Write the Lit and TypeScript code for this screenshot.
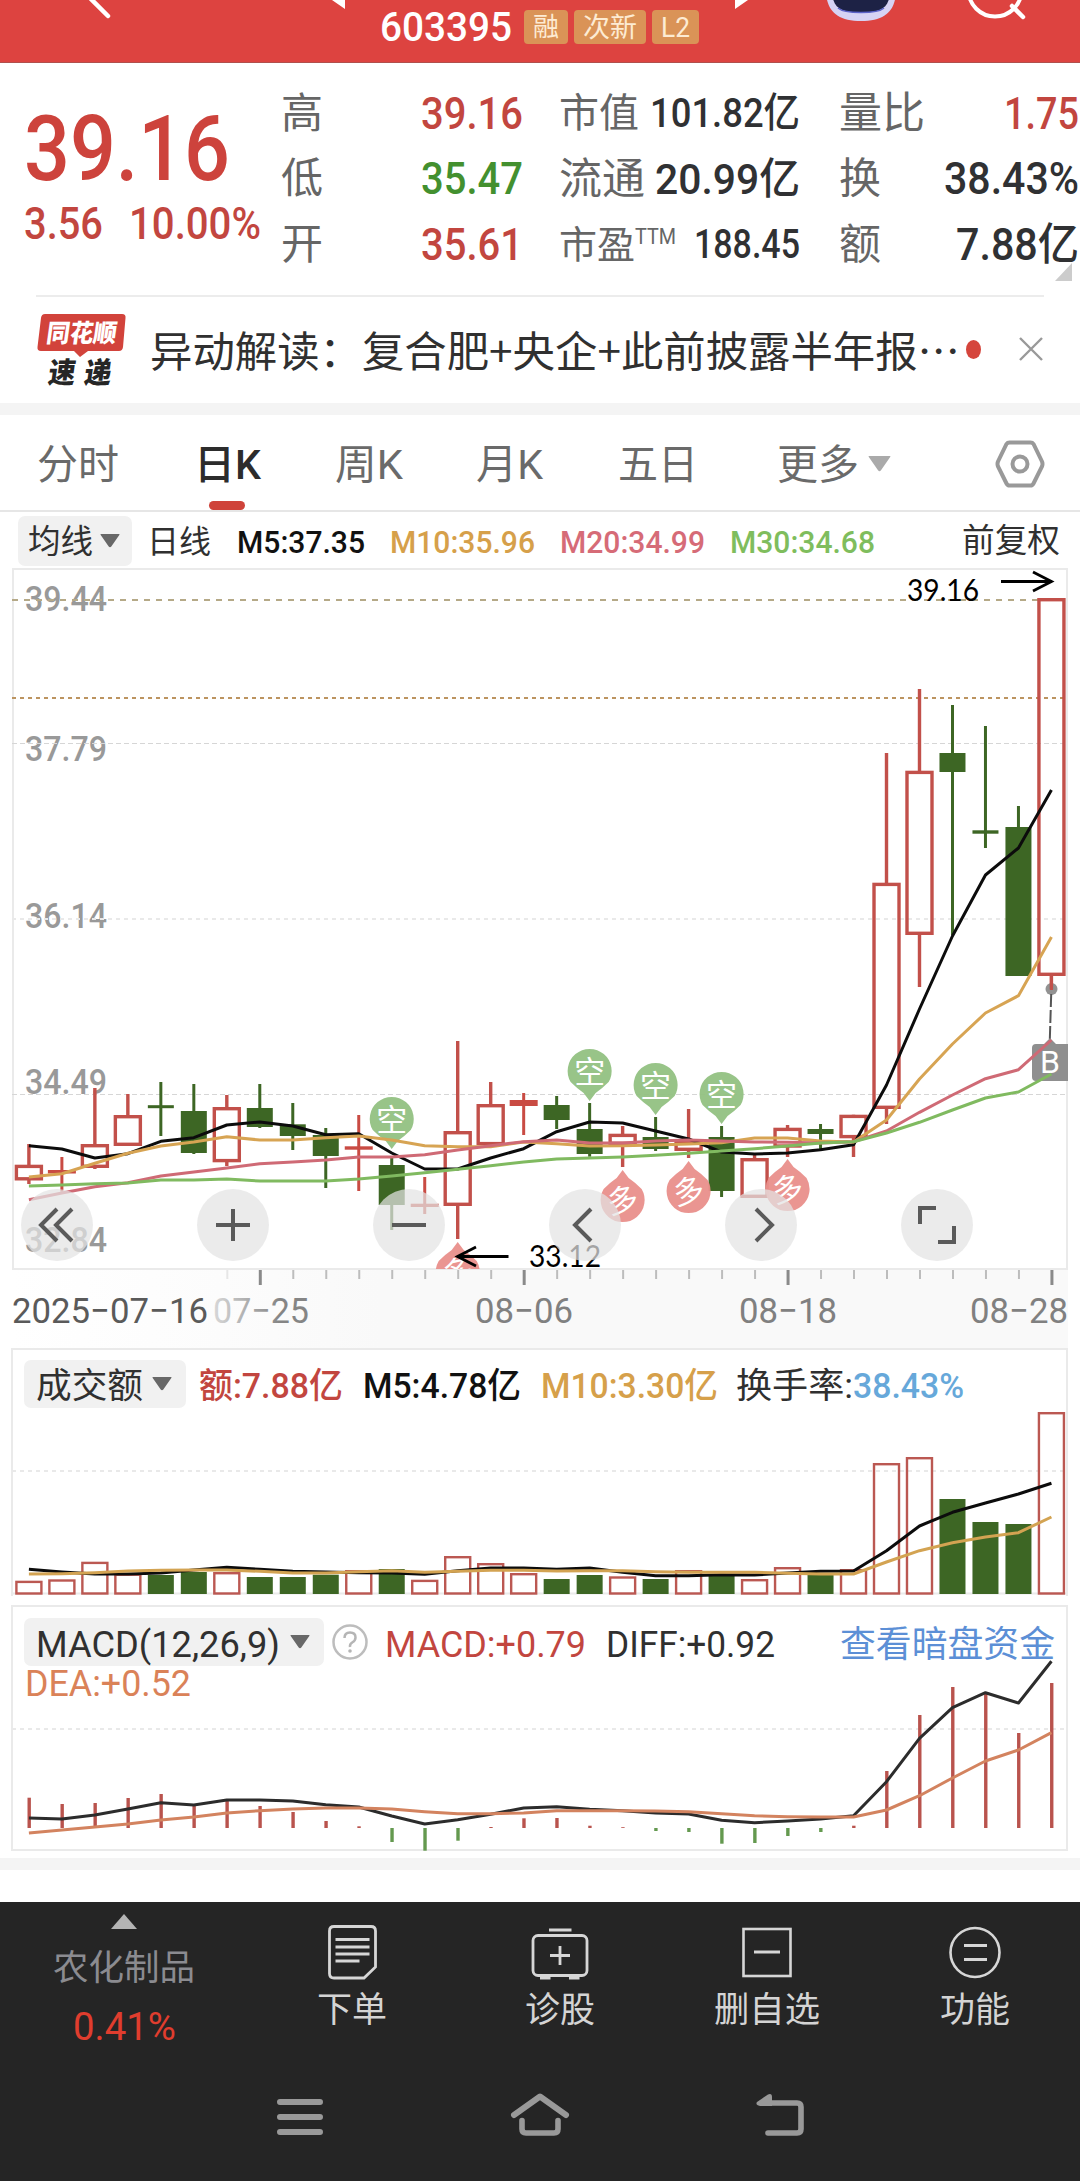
import { LitElement, html, svg, css } from "lit";
import { customElement } from "lit/decorators.js";

const X = (i: number) => 28.9 + i * 32.985;

type Candle = [string, number, number, number, number];
// colour, high, body top, body bottom, low
const candles: Candle[] = [
  ["r", 1144, 1164.7, 1180.5, 1184], ["r", 1157, 1170, 1173.5, 1191.7], ["r", 1088, 1144, 1168, 1169],
  ["r", 1094, 1115, 1146, 1146], ["g", 1082, 1105.2, 1108.2, 1136], ["g", 1084, 1111, 1153, 1154],
  ["r", 1095, 1107, 1162.3, 1166], ["g", 1084, 1108, 1127, 1128], ["g", 1103, 1124.3, 1136, 1150],
  ["g", 1128, 1135, 1156, 1188], ["r", 1115, 1146.3, 1149.7, 1191], ["g", 1156, 1165, 1205, 1230],
  ["r", 1177, 1203.7, 1207, 1214], ["r", 1041, 1131, 1206, 1239], ["r", 1082, 1104, 1145.3, 1145],
  ["r", 1093, 1100, 1106, 1135], ["g", 1096, 1105, 1120, 1129], ["g", 1103, 1129, 1154, 1156.7],
  ["r", 1126, 1133.7, 1145, 1167], ["g", 1117, 1137, 1149, 1151], ["r", 1109, 1140, 1151, 1158],
  ["g", 1126, 1137, 1191, 1197], ["r", 1155, 1158, 1198, 1198], ["r", 1125, 1127.7, 1147.7, 1157],
  ["g", 1124, 1129, 1134, 1149], ["r", 1114.7, 1114.7, 1138.3, 1157], ["r", 753, 882.7, 1109, 1124],
  ["r", 689, 770.7, 935, 987], ["g", 705, 753, 772, 935], ["g", 726, 830.3, 833.7, 848],
  ["g", 806, 827, 976, 976], ["r", 598, 598, 976, 989],
];
const ma5 = [1145.7, 1149, 1158, 1153.7, 1141.3, 1137.7, 1125, 1122, 1126, 1134.7, 1133.7, 1153, 1169, 1169, 1158, 1148.7, 1131.7, 1122, 1123, 1131, 1139, 1152, 1154, 1153, 1149.7, 1144.7, 1085, 1009, 936, 875, 848, 790];
const ma10 = [1177, 1173.7, 1163.3, 1153.3, 1146, 1142, 1136.7, 1140, 1140, 1137.7, 1136, 1140, 1145.7, 1146.7, 1146.7, 1142, 1143.7, 1146, 1145.7, 1145, 1144, 1142.7, 1138, 1138, 1141, 1142, 1120, 1079, 1044, 1013, 995.7, 937];
const ma20 = [1199.7, 1193, 1186.7, 1182.7, 1176, 1172, 1168, 1163.7, 1162, 1160, 1157, 1157, 1154.7, 1150, 1145.7, 1141.7, 1140, 1143, 1143, 1141, 1140, 1141, 1142, 1142.3, 1143, 1141.7, 1131, 1112.3, 1095, 1078.7, 1069.7, 1040];
const ma30 = [1186, 1185, 1183.7, 1183, 1180, 1180, 1179, 1181, 1181, 1181, 1179, 1176, 1172.7, 1169.3, 1165.7, 1162, 1159, 1158, 1157, 1155.3, 1153.3, 1151, 1148.7, 1146, 1143, 1141.7, 1133, 1122.3, 1110, 1098, 1092, 1074];

const volume = "r1580.7 r1579.3 r1561.7 r1573.5 g1575 g1572 r1572 g1577 g1577 g1574.7 r1570 g1569 r1579.7 r1556 r1563 r1573 g1579 g1575 r1576.3 g1579 r1570 g1575 r1579 r1567 g1575 r1569 r1463 r1457 g1499 g1522 g1524 r1412".split(" ");
const vol5 = [1569.3, 1572, 1574, 1574, 1573, 1570, 1567.3, 1569.3, 1571.3, 1572, 1572.7, 1573, 1574.3, 1570.7, 1568, 1568, 1569.3, 1568, 1572.3, 1575.7, 1575.7, 1574.7, 1575, 1573, 1571.3, 1571, 1550.7, 1526, 1512.3, 1503, 1494, 1483.3];
const vol10 = [1574, 1573.7, 1572.7, 1571, 1570.3, 1570, 1570, 1571.3, 1573, 1573, 1571.7, 1570.7, 1572.3, 1571.3, 1570.3, 1570.3, 1571, 1570.7, 1570.7, 1571.7, 1572.3, 1572.3, 1572.3, 1573.3, 1574, 1574, 1562, 1550.7, 1542.7, 1537, 1532.7, 1517];

const ZERO = 1828;
const macd = [1797.7, 1804, 1803, 1798, 1794, 1804, 1801, 1806, 1812, 1821, 1826.3, 1842, 1850.7, 1840.7, 1827, 1818.3, 1818, 1825.7, 1827.2, 1831, 1832, 1843.7, 1843, 1836, 1832, 1825.7, 1771, 1715, 1687, 1693, 1733, 1683];
const diff = [1818, 1819, 1815, 1809, 1802.7, 1805, 1800, 1800, 1801, 1804.7, 1807, 1816, 1824, 1819.7, 1814.3, 1808, 1806.7, 1809.3, 1810.7, 1813, 1814, 1820.3, 1822.7, 1821, 1819, 1815.7, 1781.7, 1738.3, 1707.7, 1692.7, 1703, 1661.3];
const dea = [1833, 1830, 1827, 1824, 1820, 1817, 1813, 1810.7, 1809, 1808, 1808, 1809, 1811.7, 1813.7, 1813.7, 1813, 1810.7, 1810.7, 1810.7, 1811, 1811.7, 1813.7, 1815.7, 1816.7, 1817, 1817, 1810, 1795.7, 1778, 1761, 1750, 1732.7];

const line = (ys: number[], color: string, w = 3) =>
  svg`<polyline points=${ys.map((y, i) => `${X(i)},${y}`).join(" ")} fill="none" stroke=${color} stroke-width=${w} stroke-linejoin="round"/>`;

// A run of text set to an exact advance width.
const fit = (text: string, w: number, size: number, cls = "") => html`<svg class="fit ${cls}" width=${w} height=${size}>
  <text x="0" y=${size * 0.86} font-size=${size} textLength=${w} lengthAdjust="spacingAndGlyphs">${text}</text></svg>`;

const label = (text: string, x: number, y: number, w: number, size: number, cls = "") =>
  svg`<text class=${cls} x=${x} y=${y} font-size=${size} textLength=${w} lengthAdjust="spacingAndGlyphs">${text}</text>`;

const caret = (cls = "") => html`<svg class="caret ${cls}" width="20" height="14" viewBox="0 0 20 14"><path d="M1 0h18q1 0 .3 1l-8 11.500q-1.300 1.500-2.600 0L.7 1Q0 0 1 0z" fill="currentColor"/></svg>`;

const RED = "#c2504a";
const GREEN = "#3d6624";

@customElement("app-root")
export class AppRoot extends LitElement {
  static styles = css`
    :host { display: block; width: 1080px; height: 2181px; overflow: hidden; background: #fff; color: #303133;
      font-family: Roboto, "Noto Sans CJK SC", sans-serif; }
    * { box-sizing: border-box; }
    svg { display: block; flex: none; }
    .fit { overflow: visible; }
    text { fill: currentColor; }
    .m { font-weight: 500; }
    .red { color: #cd433c; }
    .red2 { color: #c2463f; }
    .green { color: #43902f; }
    .gray { color: #666; }
    .cjk { font-family: "Noto Sans CJK SC", sans-serif; }
    .lato { font-family: Lato, sans-serif; color: #000; }

    .header { height: 63px; background: #dd4340; border-bottom: 1px solid #b0504d; position: relative; color: #fff;
      display: flex; align-items: flex-start; padding: 7px 0 0 380px; }
    .header .art { position: absolute; left: 0; top: 0; }
    .code { margin-right: 12px; }
    .tag { height: 34px; margin-top: 3px; margin-right: 6px; border-radius: 4px; background: #da9357; color: #fdebd3;
      display: flex; align-items: center; justify-content: center; padding: 0 9px; }

    .quote { height: 232px; display: grid; grid-template-columns: 281px 1fr; position: relative; }
    .price { padding: 39px 0 0 24px; }
    .change { display: flex; gap: 26px; margin-top: 8px; }
    .stats { padding-top: 17px; display: grid; grid-template-columns: 242px 36px 241px 39px 240px; grid-auto-rows: 65.500px; }
    .cell { display: flex; justify-content: space-between; align-items: center; }
    .c2 { grid-column: 3; }
    .c3 { grid-column: 5; }
    .cell .group { display: flex; }
    .corner { position: absolute; right: 8px; bottom: 14px; }

    .news { margin: 0 36px; border-top: 2px solid #ececec; height: 108px; display: flex; align-items: center; }
    .news .logo { margin: 0 24px 0 0; }
    .headline { padding-top: 3px; }
    .dot { width: 19px; height: 19px; border-radius: 50%; background: #d5453c; margin: -2px 0 0 6px; }
    .close { margin: -2px 0 0 37px; }
    .band { height: 12px; background: #f4f4f4; }

    .tabs { height: 97px; border-bottom: 2px solid #e6e6e6; display: grid; padding: 2px 0 0 37px;
      grid-template-columns: 157px 141px 141px 142px 159px 91px 127px 50px; align-items: center; }
    .tab { position: relative; height: 100%; display: flex; align-items: center; padding-top: 2px; color: #6a6a6a; }
    .tab.on { color: #2c2c2c; }
    .tab.on::after { content: ""; position: absolute; left: 15px; bottom: 0; width: 36px; height: 9px; border-radius: 5px; background: #cf433a; }
    .tabs .caret { width: 23px; height: 18px; color: #aaa; }

    .ma { height: 56px; padding: 1px 0 0 18px; display: grid; align-items: center;
      grid-template-columns: 129px 90px 153px 170px 170px 232px 100px; }
    .pill { display: flex; align-items: center; justify-content: space-between; background: #f1f1f1; border-radius: 7px; }
    .ma .pill { width: 114px; height: 50px; padding: 0 12px 0 10px; }
    .pill .fit { margin-top: 2px; }
    .pill .caret { color: #686868; }
    .k { color: #111; }
    .o { color: #d6a04a; }
    .p { color: #d66b77; }
    .l { color: #7fbd5d; }
    .d { color: #303030; }
    .blue { color: #66a8da; }
    .link { color: #5c8fd6; }
    .dea { color: #da8258; }

    .axis-text { color: #999; font-weight: 500; }
    .date { color: #808080; font-weight: 400; }
    .date0 { color: #5a5a5a; }
    .white, .marker { color: #fff; }
    .black { color: #262626; }
    .faded { fill: url(#fade); }

    .panel { margin: 0 11px; width: 1057px; border: 2px solid #eaeaea; position: relative; }
    .vol { height: 248px; border-bottom-width: 0; }
    .macd { height: 246px; margin-top: 9px; }
    .panel > .plot { position: absolute; left: -13px; top: -2px; }
    .row { position: relative; display: grid; align-items: center; padding-left: 11px; }
    .row > .fit { margin-top: 3px; }
    .vol .row { padding-top: 10px; grid-template-columns: 175px 164px 178px 195px 117px 110px; }
    .vol .pill { width: 162px; height: 48px; padding: 0 14px 0 12px; }
    .macd .row { padding-top: 11px; grid-template-columns: 308px 53px 221px 234px 216px; }
    .macd .pill { width: 300px; height: 48px; padding: 0 14px 0 12px; }
    .macd .row2 { position: relative; padding-left: 12px; margin-top: -2px; }
    .last { margin-top: 7px; }

    .footer { margin-top: 32px; height: 279px; background: #252525; color: #d4d4d4; display: flex; flex-direction: column; }
    .actions { height: 166px; display: grid; grid-template-columns: 248px repeat(4, 207.700px); }
    .act { display: flex; flex-direction: column; align-items: center; padding-top: 20px; }
    .act .fit { margin-top: 12px; }
    .sector { display: flex; flex-direction: column; align-items: center; padding-top: 12px; color: #8b8b90; }
    .sector .fit { margin-top: 20px; }
    .sector .pct { color: #e03d2e; margin-top: 21px; }
    .nav { display: flex; justify-content: space-between; align-items: center; padding: 24px 276px 0; }
  `;

  candle([c, hi, top, bot, lo]: Candle, i: number) {
    const x = X(i), h = bot - top;
    if (c === "g" || h < 7) {
      const col = c === "g" ? GREEN : "#c94b43";
      return svg`<path d="M${x} ${hi}V${lo}" stroke=${col} stroke-width="3"/>
        <rect x=${x - (c === "g" ? 13 : 14)} y=${top} width=${c === "g" ? 26 : 28} height=${h} fill=${col}/>`;
    }
    return svg`<path d="M${x} ${hi}V${top + 1}M${x} ${bot - 1}V${lo}" stroke=${RED} stroke-width="3.4"/>
      <rect x=${x - 12.5} y=${top + 1.7} width="25" height=${h - 3.4} fill="none" stroke=${RED} stroke-width="3.4"/>`;
  }

  marker(i: number, cy: number, up: boolean) {
    const x = X(i), s = up ? -1 : 1;
    return svg`<g><path fill=${up ? "#e98f8b" : "#92c182"} fill-opacity=".95"
        d="M${x - 19} ${cy + s * 11}A22 22 0 1 ${up ? 0 : 1} ${x + 19} ${cy + s * 11}Q${x + 12} ${cy + s * 18} ${x + 6} ${cy + s * 22}L${x} ${cy + s * 30}L${x - 6} ${cy + s * 22}Q${x - 12} ${cy + s * 18} ${x - 19} ${cy + s * 11}z"/>
      <text class="marker cjk" x=${x} y=${cy + 11.5} font-size="31" text-anchor="middle" transform=${up ? `rotate(-12 ${x} ${cy})` : ""}>${up ? "多" : "空"}</text></g>`;
  }

  button(x: number, d: string) {
    return svg`<circle cx=${x} cy="1225" r="36" fill="#e3e3e3" fill-opacity=".72"/>
      <path transform="translate(${x} 1225)" d=${d} fill="none" stroke="#5a5a5a" stroke-width="4"/>`;
  }

  priceChart() {
    return html`<svg class="plot" width="1080" height="780" viewBox="0 568 1080 780">
      <defs>
        <clipPath id="frame"><rect x="11" y="568" width="1057" height="701"/></clipPath>
        <linearGradient id="shade" x1="0" x2="1" y1="0" y2="0"><stop offset="0" stop-color="#fff"/><stop offset=".2" stop-color="#fcfcfc"/><stop offset=".35" stop-color="#f9f9f9"/><stop offset="1" stop-color="#f9f9f9"/></linearGradient>
        <linearGradient id="fade" gradientUnits="userSpaceOnUse" x1="210" x2="280" y1="0" y2="0"><stop offset="0" stop-color="#dcdcdc"/><stop offset="1" stop-color="#858585"/></linearGradient>
      </defs>
      <rect x="11" y="1270" width="1057" height="78" fill="url(#shade)"/>
      <rect x="13" y="569" width="1054" height="700" fill="none" stroke="#eaeaea" stroke-width="2"/>
      ${label("39.44", 25, 611, 82, 35.5, "axis-text")}
      ${label("37.79", 25, 761, 82, 35.5, "axis-text")}
      ${label("36.14", 25, 927.5, 82, 35.5, "axis-text")}
      ${label("34.49", 25, 1094, 82, 35.5, "axis-text")}
      ${label("32.84", 25, 1252, 82, 35.5, "axis-text")}
      <path d="M12 600H1040" stroke="#b5a987" stroke-width="2" stroke-dasharray="6 6"/>
      <path d="M12 698H1066" stroke="#bc9460" stroke-width="2" stroke-dasharray="4 4"/>
      <path d="M12 743.500H1066M12 1094.500H1066" stroke="#d6d6d6" stroke-width="1" stroke-dasharray="5 3"/>
      <path d="M12 919H1066" stroke="#e9e9e9" stroke-width="2" stroke-dasharray="4 4"/>
      <g clip-path="url(#frame)">
        ${candles.map((c, i) => this.candle(c, i))}
        <circle cx="1051.500" cy="989" r="6" fill="#777" fill-opacity=".8"/>
        <path d="M1051.400 976V990" stroke=${RED} stroke-width="3.200"/>
        <path d="M1051.200 994L1049.800 1040" stroke="#555" stroke-width="2" stroke-dasharray="13 3"/>
        <path d="M1036 1044h8l6-6 6 6h12v37h-32q-4 0-4-4v-29q0-4 4-4z" fill="#8f8f8f"/>
        <text class="white" x="1050" y="1073" font-size="32" text-anchor="middle">B</text>
        ${this.marker(11, 1119, false)}${this.marker(17, 1071, false)}${this.marker(19, 1085, false)}${this.marker(21, 1094, false)}
        ${this.marker(13, 1272, true)}${this.marker(18, 1200, true)}${this.marker(20, 1191, true)}${this.marker(23, 1189, true)}
        ${line(ma5, "#0c0c0c")}${line(ma10, "#d7a453")}${line(ma20, "#cf6a75")}${line(ma30, "#80ba60")}
      </g>
      ${label("39.16", 907, 600.5, 72, 31, "lato")}
      <path d="M1001 581.500H1051M1033 572L1051.500 581.500L1033 591" fill="none" stroke="#000" stroke-width="2.800"/>
      ${label("33.12", 529, 1266.5, 72, 31, "lato")}
      <path d="M508.500 1256.500H458M476 1247L457.500 1256.500L476 1266" fill="none" stroke="#000" stroke-width="2.800"/>
      ${this.button(57, "M0 -16L-16 0L0 16M15 -16L-1 0L15 16")}
      ${this.button(233, "M-17 0H17M0 -16V16")}
      ${this.button(409, "M-17 0H17")}
      ${this.button(585, "M6 -16L-10 0L6 16")}
      ${this.button(761, "M-5 -16L11 0L-5 16")}
      ${this.button(937, "M-17 -1V-17H-1M17 1V17H1")}
      ${candles.map((_, i) => i < 6 ? "" : i % 8 === 7
        ? svg`<path d="M${X(i) + 0.5} 1270V1285" stroke="#8a8a8a" stroke-width="3"/>`
        : svg`<path d="M${X(i) + 0.5} 1270V1279" stroke=${i === 6 ? "#e6e6e6" : "#bdbdbd"} stroke-width="2"/>`)}
      ${label("2025−07−16", 12, 1322.5, 196, 35.5, "date0")}
      ${label("07−25", 213, 1322.5, 96, 35.5, "faded")}
      ${label("08−06", 475, 1322.5, 98, 35.5, "date")}
      ${label("08−18", 739, 1322.5, 98, 35.5, "date")}
      ${label("08−28", 970, 1322.5, 98, 35.5, "date")}
    </svg>`;
  }

  stat(cls: string, name: unknown, value: unknown) {
    return html`<div class="cell ${cls}"><div class="group">${name}</div>${value}</div>`;
  }

  render() {
    return html`
      <div class="header">
        <svg class="art" width="1080" height="63">
          <path d="M88 -4L108 16" stroke="#fff" stroke-width="4.500" stroke-linecap="round"/>
          <path d="M332 0H345V9zM735 9V0H748z" fill="#fff"/>
          <path d="M826 -6C828 12 838 21 861 21S894 12 896 -6z" fill="#d6d3f4"/>
          <path d="M832 -6C834 9 842 12.500 861 12.500S888 9 890 -6z" fill="#1d2245"/>
          <path d="M838 8Q843 12.500 861 12.500T884 8" fill="none" stroke="#5b62c8" stroke-width="1.600"/>
          <circle cx="995" cy="-10" r="26.500" fill="none" stroke="#fff" stroke-width="4"/>
          <path d="M1012 6L1023 17" stroke="#fff" stroke-width="4.500" stroke-linecap="round"/>
        </svg>
        <div class="code">${fit("603395", 132, 40, "m")}</div>
        <div class="tag">${fit("融", 26, 26)}</div>
        <div class="tag">${fit("次新", 54, 27)}</div>
        <div class="tag">${fit("L2", 29, 28)}</div>
      </div>

      <div class="quote">
        <div class="price">
          <div class="red">${fit("39.16", 206, 91, "m")}</div>
          <div class="change red2">${fit("3.56", 79, 44, "m")}${fit("10.00%", 132, 44, "m")}</div>
        </div>
        <div class="stats">
          ${this.stat("", fit("高", 42, 42, "gray"), fit("39.16", 102, 44, "m red2"))}
          ${this.stat("c2", fit("市值", 80, 40, "gray"), fit("101.82亿", 150, 41, "m"))}
          ${this.stat("c3", fit("量比", 86, 43, "gray"), fit("1.75", 75, 44, "m red2"))}
          ${this.stat("", fit("低", 42, 42, "gray"), fit("35.47", 102, 44, "m green"))}
          ${this.stat("c2", fit("流通", 86, 43, "gray"), fit("20.99亿", 145, 43, "m"))}
          ${this.stat("c3", fit("换", 42, 42, "gray"), fit("38.43%", 135, 44, "m"))}
          ${this.stat("", fit("开", 42, 42, "gray"), fit("35.61", 102, 44, "m red2"))}
          ${this.stat("c2", html`${fit("市盈", 76, 38, "gray")}${fit("TTM", 41, 22, "gray")}`, fit("188.45", 106, 40, "m"))}
          ${this.stat("c3", fit("额", 42, 42, "gray"), fit("7.88亿", 123, 44, "m"))}
        </div>
        <svg class="corner" width="17" height="18"><path d="M17 0V18H0z" fill="#ccc"/></svg>
      </div>

      <div class="news">
        <svg class="logo" width="90" height="74" viewBox="36 312 90 74">
          <path d="M45 313H122q4 0 3.500 4L123 346q-.500 4-4 4H88l-8 6-6-6H41q-4 0-3.500-4L41 317q.500-4 4-4z" fill="#d2433b"/>
          <g transform="skewX(-8)" class="cjk" font-weight="900">
            <text class="white" x="93.500" y="341" font-size="25" textLength="70" lengthAdjust="spacingAndGlyphs">同花顺</text>
            <text class="black" x="101" y="382" font-size="29" textLength="27" lengthAdjust="spacingAndGlyphs">速</text>
            <text class="black" x="137" y="382" font-size="29" textLength="27" lengthAdjust="spacingAndGlyphs">递</text>
          </g>
        </svg>
        <div class="headline">${fit("异动解读：复合肥+央企+此前披露半年报…", 810, 42, "cjk d")}</div>
        <div class="dot"></div>
        <svg class="close" width="26" height="26"><path d="M2 2L24 24M24 2L2 24" stroke="#999" stroke-width="2.400"/></svg>
      </div>
      <div class="band"></div>

      <div class="tabs">
        <div class="tab">${fit("分时", 82, 41)}</div>
        <div class="tab on">${fit("日K", 67, 41, "m")}</div>
        <div class="tab">${fit("周K", 68, 41)}</div>
        <div class="tab">${fit("月K", 67, 41)}</div>
        <div class="tab">${fit("五日", 80, 41)}</div>
        <div class="tab">${fit("更多", 82, 41)}</div>
        ${caret()}
        <svg width="50" height="48" viewBox="0 0 50 48"><path d="M14.500 2.500H35.500Q37.500 2.500 38.500 4L47 21.500Q48 24 47 26.500L38.500 43.500Q37.500 45.500 35.500 45.500H14.500Q12.500 45.500 11.500 43.500L3 26.500Q2 24 3 21.500L11.500 4Q12.500 2.500 14.500 2.500z" fill="none" stroke="#999" stroke-width="4"/><circle cx="25" cy="24" r="7.500" fill="none" stroke="#999" stroke-width="4"/></svg>
      </div>

      <div class="ma">
        <div class="pill d">${fit("均线", 65, 32.5)}${caret()}</div>
        ${fit("日线", 64, 32, "d")}
        ${fit("M5:37.35", 128, 32, "m k")}
        ${fit("M10:35.96", 145, 32, "m o")}
        ${fit("M20:34.99", 145, 32, "m p")}
        ${fit("M30:34.68", 145, 32, "m l")}
        ${fit("前复权", 98, 32.5, "d")}
      </div>

      ${this.priceChart()}

      <div class="panel vol">
        <svg class="plot" width="1080" height="248" viewBox="0 1348 1080 248">
          <path d="M12 1471H1066" stroke="#e9e9e9" stroke-width="2" stroke-dasharray="4 4"/>
          <path d="M12 1593.500H1066" stroke="#eaeaea" stroke-width="2"/>
          ${volume.map((v, i) => {
            const y = +v.slice(1), x = X(i);
            return v[0] === "g"
              ? svg`<rect x=${x - 13} y=${y} width="26" height=${1594 - y} fill=${GREEN}/>`
              : svg`<rect x=${x - 12.5} y=${y + 1.2} width="25" height=${1593.5 - y - 1.2} fill="none" stroke="#bb5852" stroke-width="2.400"/>`;
          })}
          ${line(vol5, "#0c0c0c")}${line(vol10, "#d3a352")}
        </svg>
        <div class="row">
          <div class="pill d">${fit("成交额", 107, 35.5)}${caret()}</div>
          ${fit("额:7.88亿", 144, 35, "m red2")}
          ${fit("M5:4.78亿", 158, 35, "m k")}
          ${fit("M10:3.30亿", 177, 35, "m o")}
          ${fit("换手率:", 117, 35, "d")}
          ${fit("38.43%", 111, 35, "m blue")}
        </div>
      </div>

      <div class="panel macd">
        <svg class="plot" width="1080" height="246" viewBox="0 1605 1080 246">
          <path d="M12 1729H1066" stroke="#e9e9e9" stroke-width="2" stroke-dasharray="4 4"/>
          ${macd.map((y, i) => svg`<path d="M${X(i) + 0.3} ${ZERO}V${y}" stroke=${y > ZERO ? "#64994f" : "#b9534d"} stroke-width="3.400"/>`)}
          ${line(diff, "#2c2c2c")}${line(dea, "#d3835f")}
        </svg>
        <div class="row">
          <div class="pill d">${fit("MACD(12,26,9)", 244, 37)}${caret()}</div>
          <svg width="36" height="36" viewBox="0 0 36 36"><circle cx="18" cy="18" r="16.500" fill="none" stroke="#bdbdbd" stroke-width="2.500"/><path d="M12.500 14Q12.500 8.500 18 8.500T23.500 13.500Q23.500 16.500 20.500 18.300T18 23" fill="none" stroke="#b5b5b5" stroke-width="2.500"/><circle cx="18" cy="27" r="1.800" fill="#b5b5b5"/></svg>
          ${fit("MACD:+0.79", 201, 37, "red2")}
          ${fit("DIFF:+0.92", 169, 37, "d")}
          ${fit("查看暗盘资金", 215, 36, "link")}
        </div>
        <div class="row2">${fit("DEA:+0.52", 166, 37, "dea")}</div>
      </div>
      <div class="band last"></div>

      <div class="footer">
        <div class="actions">
          <div class="sector">
            <svg width="26" height="15"><path d="M13 0L26 15H0z" fill="#b4b4b4"/></svg>
            ${fit("农化制品", 142, 35.5)}
            ${fit("0.41%", 103, 39, "pct")}
          </div>
          <div class="act">
            <svg width="60" height="58" viewBox="322 1922 60 58" fill="none" stroke="#d6d6d6" stroke-width="2.800"><path d="M334 1926.500H371Q375.500 1926.500 375.500 1931V1967L364 1978H334Q329.500 1978 329.500 1973.500V1931Q329.500 1926.500 334 1926.500z"/><path d="M335.500 1939.500H369.500M335.500 1947H369.500M335.500 1954H369.500M335.500 1961H359.500"/></svg>
            ${fit("下单", 70, 35)}
          </div>
          <div class="act">
            <svg width="60" height="58" viewBox="529.500 1922 60 58" fill="none" stroke="#d6d6d6" stroke-width="2.800"><rect x="532.500" y="1935.500" width="54" height="40" rx="5"/><path d="M548.500 1930H571M559.500 1946V1965M549.500 1955.500H569.500M539.500 1978H550M568.500 1978H579"/></svg>
            ${fit("诊股", 70, 35)}
          </div>
          <div class="act">
            <svg width="60" height="58" viewBox="737 1922 60 58" fill="none" stroke="#d6d6d6" stroke-width="2.600"><rect x="743.500" y="1929" width="47" height="47"/><path d="M754 1952H780" stroke-width="3"/></svg>
            ${fit("删自选", 106, 35)}
          </div>
          <div class="act">
            <svg width="60" height="58" viewBox="945 1922 60 58" fill="none" stroke="#d6d6d6" stroke-width="2.600"><circle cx="975" cy="1952.500" r="24.500"/><path d="M964 1945.500H987M964 1959.500H987" stroke-width="3"/></svg>
            ${fit("功能", 70, 35)}
          </div>
        </div>
        <div class="nav">
          <svg width="48" height="44" viewBox="276 2094 48 44"><path d="M280 2103H320M280 2118H320M280 2133H320" stroke="#999" stroke-width="6" stroke-linecap="round"/></svg>
          <svg width="60" height="46" viewBox="510 2092 60 46" fill="none" stroke="#999" stroke-width="6" stroke-linecap="round" stroke-linejoin="round"><path d="M514 2115L540 2096.500L566 2115"/><path d="M522 2120.500V2129Q522 2133 526 2133H554Q558 2133 558 2129V2120.500" stroke-width="5.600"/></svg>
          <svg width="48" height="46" viewBox="756 2092 48 46"><path d="M768 2133H797Q801 2133 801 2129V2107Q801 2103 797 2103H762" fill="none" stroke="#999" stroke-width="5.600" stroke-linecap="round"/><path d="M757 2102L768 2094.500Q772 2093 772 2097V2106H760Q755 2105 757 2102z" fill="#999"/></svg>
        </div>
      </div>
    `;
  }
}
